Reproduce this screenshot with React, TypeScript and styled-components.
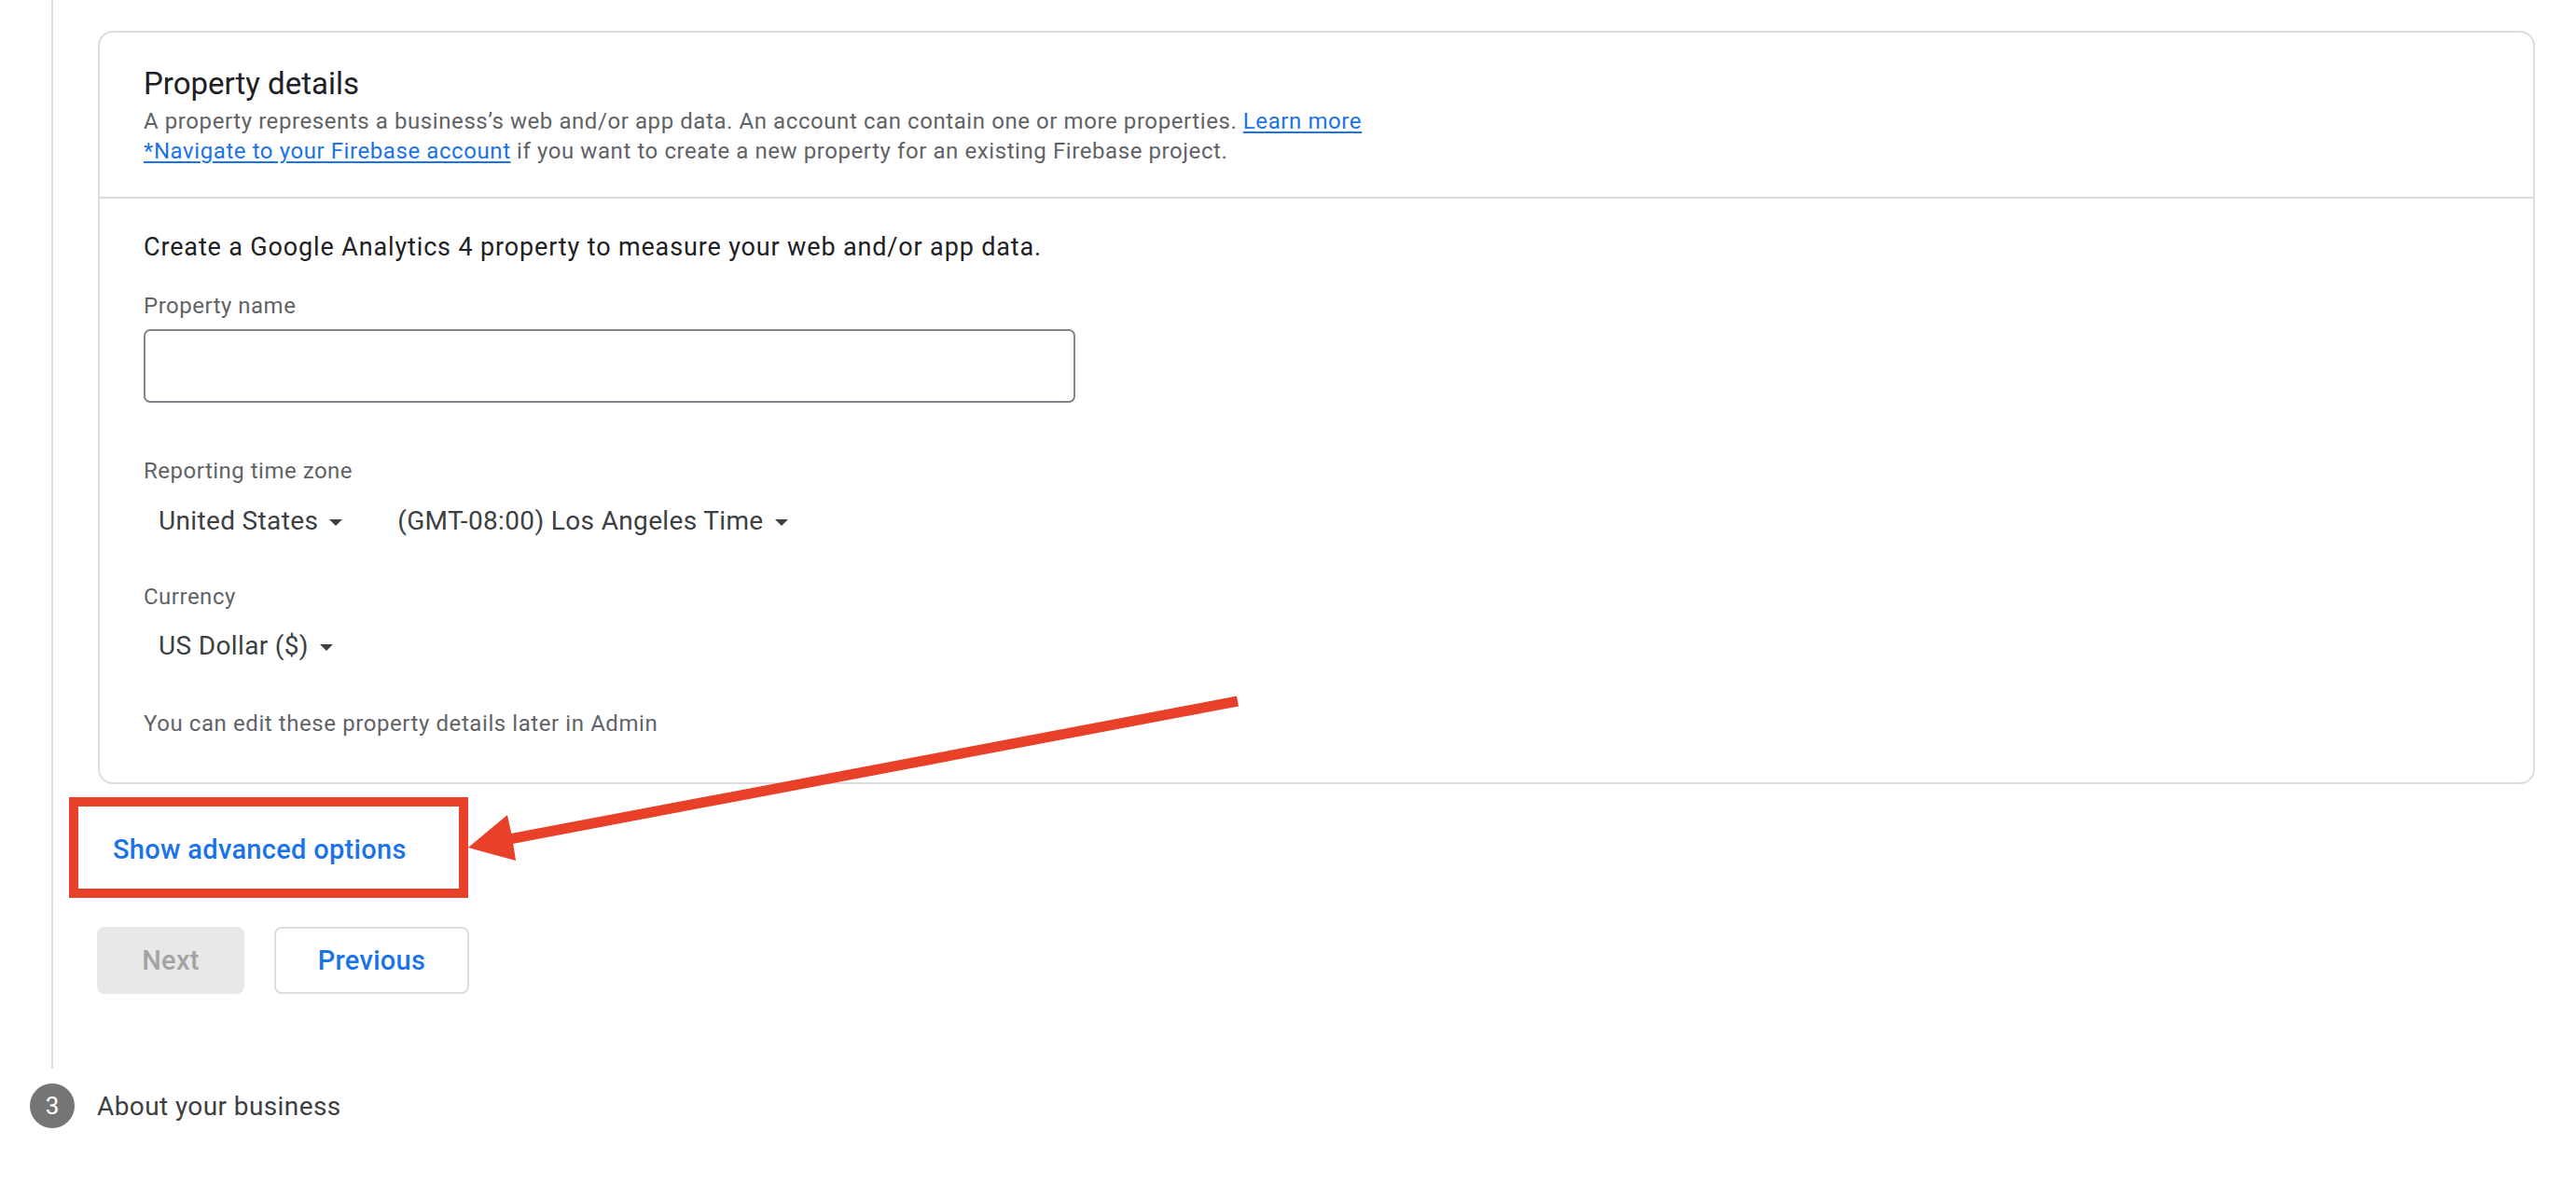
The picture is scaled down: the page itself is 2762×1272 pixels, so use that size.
import React from 'react';
import styled, { createGlobalStyle } from 'styled-components';

const GlobalStyle = createGlobalStyle`
  html, body {
    margin: 0;
    padding: 0;
    background: #ffffff;
  }
  body {
    font-family: Roboto, "Liberation Sans", Arial, sans-serif;
    color: #202124;
  }
  * {
    box-sizing: border-box;
  }
`;

const Page = styled.div`
  position: relative;
  width: 100%;
  min-height: 1272px;
`;

const StepBody = styled.div`
  display: grid;
  grid-template-columns: 104px 1fr;
`;

const Rail = styled.div`
  display: flex;
`;

const RailLine = styled.div`
  width: 2px;
  margin-left: 55px;
  background: #dadce0;
`;

const Content = styled.div`
  display: flex;
  flex-direction: column;
  align-items: flex-start;
  padding: 33px 44px 80px 0;
`;

const Card = styled.section`
  align-self: stretch;
  margin-left: 1px;
  border: 2px solid #dadce0;
  border-radius: 16px;
  background: #fff;
`;

const CardHeader = styled.header`
  padding: 35px 47px 33px;
  border-bottom: 2px solid #dadce0;
`;

const Title = styled.h2`
  margin: 0;
  font-size: 33px;
  line-height: 40px;
  font-weight: 400;
  color: #202124;
`;

const Description = styled.div`
  margin-top: 4px;
  font-size: 24px;
  line-height: 32px;
  letter-spacing: 0.58px;
  color: #5f6368;
`;

const Link = styled.a`
  color: #1a73e8;
  text-decoration: underline;
  text-underline-offset: 3px;
  cursor: pointer;
`;

const CardBody = styled.div`
  display: flex;
  flex-direction: column;
  align-items: flex-start;
  padding: 34px 47px 47px;
`;

const Lead = styled.p`
  margin: 0;
  font-size: 27px;
  line-height: 36px;
  letter-spacing: 0.85px;
  color: #202124;
`;

const FieldLabel = styled.div<{ $gap: number }>`
  margin-top: ${p => p.$gap}px;
  font-size: 24px;
  line-height: 32px;
  letter-spacing: 0.5px;
  color: #5f6368;
`;

const TextInput = styled.input`
  margin-top: 9px;
  width: 999px;
  height: 79px;
  border: 2px solid #80868b;
  border-radius: 7px;
  padding: 0 24px;
  font-family: inherit;
  font-size: 28px;
  outline: none;
`;

const SelectRow = styled.div<{ $gap: number }>`
  display: flex;
  gap: 43px;
  margin-top: ${p => p.$gap}px;
`;

const Select = styled.div`
  display: inline-flex;
  align-items: center;
  gap: 12px;
  padding-left: 16px;
  font-size: 28px;
  line-height: 36px;
  letter-spacing: 0.35px;
  color: #3c4043;
  cursor: pointer;
`;

const Caret = styled.svg`
  width: 14px;
  height: 7px;
  margin-top: 2px;
`;

const Note = styled.div`
  margin-top: 49px;
  font-size: 24px;
  line-height: 32px;
  letter-spacing: 0.58px;
  color: #5f6368;
`;

const Highlight = styled.div`
  display: flex;
  align-items: flex-start;
  width: 428px;
  height: 108px;
  margin: 14px 0 0 -30px;
  padding: 28px 0 0 37px;
  border: 10px solid #e94129;
`;

const AdvancedLink = styled.button`
  border: none;
  background: none;
  padding: 0;
  font-family: inherit;
  font-size: 29px;
  line-height: 36px;
  font-weight: 500;
  letter-spacing: 0.3px;
  color: #1a73e8;
  cursor: pointer;
`;

const ButtonRow = styled.div`
  display: flex;
  gap: 32px;
  margin-top: 31px;
`;

const ActionButton = styled.button<{ $variant: 'disabled' | 'outline'; $width: number }>`
  width: ${p => p.$width}px;
  height: 72px;
  border-radius: 8px;
  font-family: inherit;
  font-size: 29px;
  font-weight: 500;
  letter-spacing: 0.3px;
  border: ${p => (p.$variant === 'outline' ? '2px solid #dadce0' : 'none')};
  background: ${p => (p.$variant === 'outline' ? '#ffffff' : '#e8e8e8')};
  color: ${p => (p.$variant === 'outline' ? '#1a73e8' : '#a3a3a3')};
  cursor: ${p => (p.$variant === 'outline' ? 'pointer' : 'default')};
`;

const StepHeader = styled.div`
  display: flex;
  align-items: center;
  gap: 24px;
  margin-top: 16px;
  padding-left: 32px;
`;

const StepNumber = styled.div`
  width: 48px;
  height: 48px;
  border-radius: 50%;
  background: #757575;
  color: #fff;
  display: flex;
  align-items: center;
  justify-content: center;
  font-size: 26px;
`;

const StepTitle = styled.div`
  font-size: 28px;
  letter-spacing: 0.4px;
  color: #3c4043;
`;

const ArrowOverlay = styled.svg`
  position: absolute;
  left: 0;
  top: 0;
  pointer-events: none;
`;

const DropCaret = () => (
  <Caret viewBox="0 0 14 7">
    <path d="M0 0h14L7 7z" fill="#3c4043" />
  </Caret>
);

const App: React.FC = () => {
  return (
    <Page>
      <GlobalStyle />
      <StepBody>
        <Rail>
          <RailLine />
        </Rail>
        <Content>
          <Card>
            <CardHeader>
              <Title>Property details</Title>
              <Description>
                <div>
                  A property represents a business’s web and/or app data. An account can contain one or more
                  properties. <Link>Learn more</Link>
                </div>
                <div>
                  <Link>*Navigate to your Firebase account</Link> if you want to create a new property for an
                  existing Firebase project.
                </div>
              </Description>
            </CardHeader>
            <CardBody>
              <Lead>Create a Google Analytics 4 property to measure your web and/or app data.</Lead>
              <FieldLabel $gap={29}>Property name</FieldLabel>
              <TextInput type="text" />
              <FieldLabel $gap={57}>Reporting time zone</FieldLabel>
              <SelectRow $gap={20}>
                <Select>
                  United States
                  <DropCaret />
                </Select>
                <Select>
                  (GMT-08:00) Los Angeles Time
                  <DropCaret />
                </Select>
              </SelectRow>
              <FieldLabel $gap={47}>Currency</FieldLabel>
              <SelectRow $gap={19}>
                <Select>
                  US Dollar ($)
                  <DropCaret />
                </Select>
              </SelectRow>
              <Note>You can edit these property details later in Admin</Note>
            </CardBody>
          </Card>
          <Highlight>
            <AdvancedLink>Show advanced options</AdvancedLink>
          </Highlight>
          <ButtonRow>
            <ActionButton $variant="disabled" $width={158} disabled>
              Next
            </ActionButton>
            <ActionButton $variant="outline" $width={209}>
              Previous
            </ActionButton>
          </ButtonRow>
        </Content>
      </StepBody>
      <StepHeader>
        <StepNumber>3</StepNumber>
        <StepTitle>About your business</StepTitle>
      </StepHeader>
      <ArrowOverlay width="2762" height="1272" viewBox="0 0 2762 1272">
        <line x1="546" y1="900" x2="1327" y2="752" stroke="#e94129" strokeWidth="11" />
        <polygon points="502,909 544,874 549,897 553,923" fill="#e94129" />
      </ArrowOverlay>
    </Page>
  );
};

export default App;
